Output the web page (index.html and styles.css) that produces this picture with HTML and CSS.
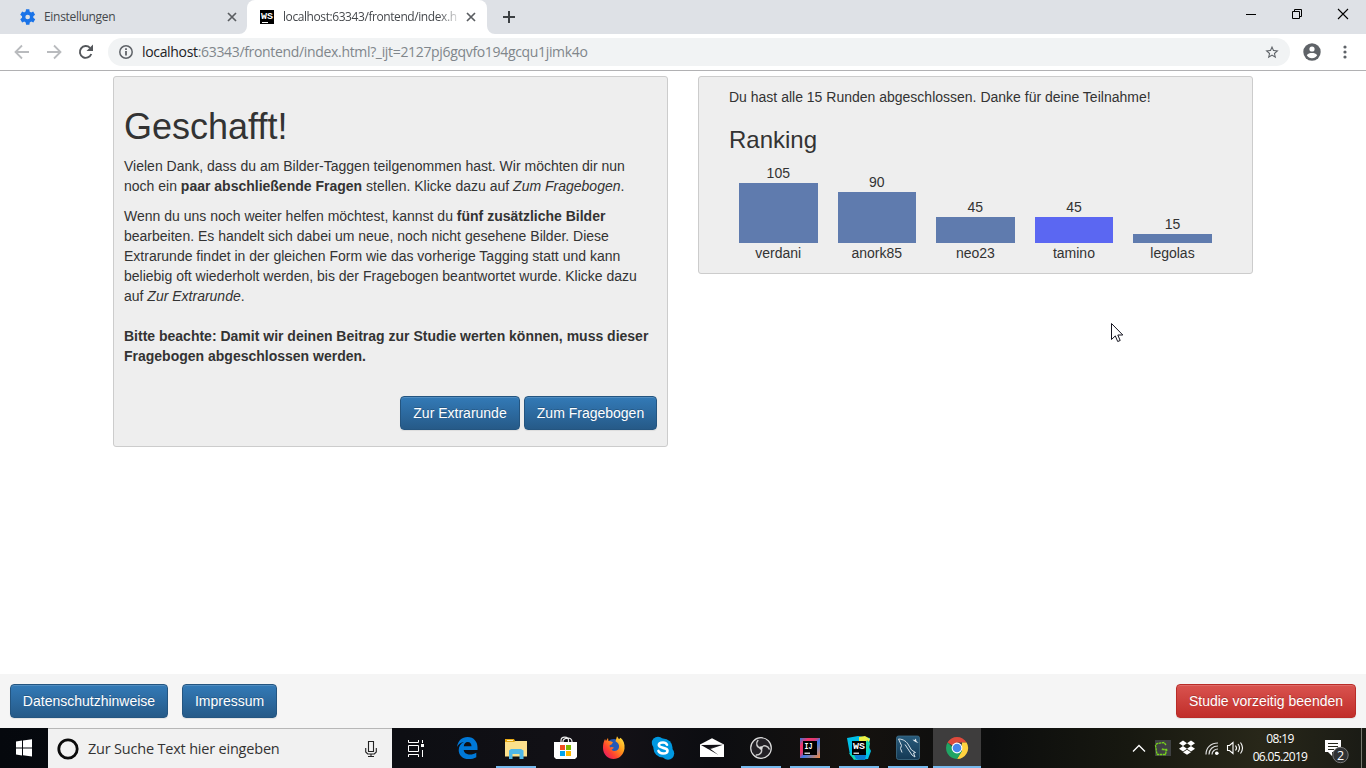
FILE: index.html
```html
<!DOCTYPE html>
<html lang="de">
<head>
<meta charset="utf-8">
<title>Tagging-Studie</title>
<link rel="stylesheet" href="styles.css">
</head>
<body>
<header class="browser">
  <div class="tabs">
    <div class="tab tab-idle">
      <svg class="favicon" width="16" height="16" viewBox="0 0 24 24"><path fill="#1a73e8" d="M19.9 13.3c.1-.4.1-.9.1-1.300s0-.9-.1-1.300l2.700-2.100-2.800-4.800-3.200 1.300c-.7-.5-1.400-.9-2.200-1.300L14 .5H9l-.5 3.300c-.8.3-1.500.7-2.200 1.300L3.200 3.800.4 8.600l2.700 2.100c-.1.400-.1.900-.1 1.300s0 .9.1 1.300L.4 15.400l2.800 4.800 3.200-1.300c.7.500 1.400.9 2.200 1.300l.5 3.300h5l.5-3.300c.8-.3 1.500-.7 2.200-1.300l3.200 1.300 2.800-4.800zM11.500 15.500a3.500 3.500 0 1 1 0-7 3.500 3.500 0 0 1 0 7z"/></svg>
      <span class="tab-title t-settings">Einstellungen</span>
      <svg class="tab-close" width="10" height="10"><path d="M1 1l8 8M9 1l-8 8" stroke="#5a5d61" stroke-width="1.700"/></svg>
    </div>
    <div class="tab tab-active">
      <svg class="curve curve-left" width="8" height="8"><path d="M8 0v8H0a8 8 0 0 0 8-8z" fill="#fff"/></svg>
      <svg class="curve curve-right" width="8" height="8"><path d="M0 0v8h8a8 8 0 0 1-8-8z" fill="#fff"/></svg>
      <svg class="favicon ws-small" width="14" height="14"><rect width="14" height="14"/><text x="1" y="8.800" class="ws-text" textLength="12" lengthAdjust="spacingAndGlyphs">WS</text><path d="M2 12.500h6" stroke="#fff"/></svg>
      <span class="tab-title t-local">localhost:63343/frontend/index.h</span>
      <svg class="tab-close" width="10" height="10"><path d="M1 1l8 8M9 1l-8 8" stroke="#5a5d61" stroke-width="1.700"/></svg>
    </div>
    <svg class="new-tab" width="12" height="12"><path d="M6 0v12M0 6h12" stroke="#3c4043" stroke-width="2"/></svg>
    <div class="window-controls">
      <svg width="46" height="28"><path d="M18 14.500h10" stroke="#000"/></svg>
      <svg width="46" height="28"><path d="M18.500 11.500h7v7h-7zM20.500 11V9.500h7v7H26" fill="none" stroke="#000"/></svg>
      <svg width="46" height="28"><path d="M18 9l10 10M28 9L18 19" stroke="#000" stroke-width="1.100"/></svg>
    </div>
  </div>
  <div class="toolbar">
    <svg class="nav" width="32" height="36"><path d="M29 18H16M22 11.500L15.500 18l6.500 6.500" fill="none" stroke="#b9bbbe" stroke-width="1.800"/></svg>
    <svg class="nav" width="32" height="36"><path d="M15 18h13M22 11.500l6.500 6.500-6.500 6.500" fill="none" stroke="#b9bbbe" stroke-width="1.800"/></svg>
    <svg class="nav" width="32" height="36"><path d="M27.300 20a5.900 5.900 0 1 1-1.300-6.200" fill="none" stroke="#54575b" stroke-width="1.900"/><path d="M29 10.500v6.500h-6.500z" fill="#54575b"/></svg>
    <div class="omnibox">
      <svg class="info" width="14" height="14"><circle cx="7" cy="7" r="6.200" fill="none" stroke="#5f6368" stroke-width="1.500"/><path d="M7 6v4.500M7 3.300v1.700" stroke="#5f6368" stroke-width="1.800"/></svg>
      <span class="url"><span class="host">localhost</span>:63343/frontend/index.html?_ijt=2127pj6gqvfo194gcqu1jimk4o</span>
      <svg class="star" width="14" height="14" viewBox="2 1 20 21"><path fill="#5f6368" d="M22 9.240l-7.190-.62L12 2 9.190 8.630 2 9.240l5.460 4.730L5.820 21 12 17.270 18.180 21l-1.630-7.030L22 9.240zM12 15.400l-3.760 2.270 1-4.280-3.320-2.880 4.380-.38L12 6.100l1.710 4.040 4.380.38-3.320 2.880 1 4.280L12 15.400z"/></svg>
    </div>
    <svg class="avatar" width="18" height="18" viewBox="0 0 18 18"><circle cx="9" cy="9" r="8.700" fill="#5f6368"/><circle cx="9" cy="6" r="2.600" fill="#fff"/><path d="M3.800 12.300C4.600 10.700 7 10.100 9 10.100s4.400.6 5.200 2.200C13 14.200 11.200 15.200 9 15.200s-4-1-5.200-2.900z" fill="#fff"/></svg>
    <svg class="dots" width="4" height="14"><g fill="#5f6368"><circle cx="2" cy="2" r="1.600"/><circle cx="2" cy="7" r="1.600"/><circle cx="2" cy="12" r="1.600"/></g></svg>
  </div>
</header>

<main class="page">
  <section class="card intro">
    <h1>Geschafft!</h1>
    <p>Vielen Dank, dass du am Bilder-Taggen teilgenommen hast. Wir möchten dir nun<br>noch ein <b>paar abschließende Fragen</b> stellen. Klicke dazu auf <i>Zum Fragebogen</i>.</p>
    <p>Wenn du uns noch weiter helfen möchtest, kannst du <b>fünf zusätzliche Bilder</b><br>bearbeiten. Es handelt sich dabei um neue, noch nicht gesehene Bilder. Diese<br>Extrarunde findet in der gleichen Form wie das vorherige Tagging statt und kann<br>beliebig oft wiederholt werden, bis der Fragebogen beantwortet wurde. Klicke dazu<br>auf <i>Zur Extrarunde</i>.</p>
    <p class="notice"><b>Bitte beachte: Damit wir deinen Beitrag zur Studie werten können, muss dieser<br>Fragebogen abgeschlossen werden.</b></p>
    <div class="actions"><button class="btn extra">Zur Extrarunde</button><button class="btn survey">Zum Fragebogen</button></div>
  </section>
  <section class="card ranking">
    <p>Du hast alle 15 Runden abgeschlossen. Danke für deine Teilnahme!</p>
    <h3>Ranking</h3>
    <div class="chart">
      <div class="entry"><span>105</span><div class="bar" style="height:60px"></div><span>verdani</span></div>
      <div class="entry"><span>90</span><div class="bar" style="height:51px"></div><span>anork85</span></div>
      <div class="entry"><span>45</span><div class="bar" style="height:26px"></div><span>neo23</span></div>
      <div class="entry"><span>45</span><div class="bar bar-me" style="height:26px"></div><span>tamino</span></div>
      <div class="entry"><span>15</span><div class="bar" style="height:9px"></div><span>legolas</span></div>
    </div>
  </section>
  <svg class="cursor" width="13" height="20"><path d="M.5.500v16l3.800-3.600 2.400 5.600 2.500-1-2.400-5.500h5z" fill="#fff" stroke="#151520"/></svg>
</main>

<footer class="footer">
  <button class="btn privacy">Datenschutzhinweise</button>
  <button class="btn imprint">Impressum</button>
  <button class="btn btn-danger">Studie vorzeitig beenden</button>
</footer>

<nav class="taskbar">
  <svg class="start" width="48" height="40"><path fill="#fff" d="M16 13.500l6-.9V19.500h-6zM23 12.500l9-1.300v8.300h-9zM16 20.500h6v6.900l-6-.9zM23 20.500h9v8l-9-1.200z"/></svg>
  <div class="search">
    <svg width="22" height="22"><circle cx="11" cy="11" r="9.200" fill="none" stroke="#0a0a0a" stroke-width="2.800"/></svg>
    <span class="placeholder">Zur Suche Text hier eingeben</span>
    <svg class="mic" width="12" height="18"><path d="M3.500 1.500h5v10h-5zM.7 8v4l2 2h6.600l2-2V8M6 14v3M3 16.500h6" fill="none" stroke="#222" stroke-width="1.100"/></svg>
  </div>
  <div class="apps">
    <div class="app app-tasks"><svg width="48" height="40"><g fill="none" stroke="#fff"><path d="M16.500 12v2.500h10V12M16.500 17.500h10v6h-10zM16.500 29v-2.500h10V29M30.500 12v3M30.500 22v7"/></g><path d="M29 16h3v3h-3z" fill="#fff"/></svg></div>
    <div class="app"><svg width="48" height="40"><path fill="#0078d7" d="M14 19C15 12.500 19 9 24.500 9 31 9 34.500 14 34.500 19v3H20.700c.3 3 3.200 4.500 6.300 4.500 2.400 0 4.300-.6 6.300-1.800v4.500c-2.200 1.300-4.700 1.900-7.600 1.900-6 0-10-3.600-10-8.800 0-3.900 2-6.900 5.300-8.300-3 .5-5.500 2-7 5zM20.800 18.200h7.700c0-2.700-1.300-4.300-3.700-4.300-2.300 0-3.800 1.800-4 4.300z"/></svg></div>
    <div class="app running"><svg width="48" height="40"><path fill="#e8a914" d="M13 11h9l1 2h12v3H13z"/><path fill="#fce08c" d="M13 14h9l1.500-1H35v15.500H13z"/><path fill="#fff0b5" d="M15 12h6v1h-6z"/><path fill="#4fb7e8" d="M17 31v-8.500l2-1.500h10l2.500 1.500V31h-4v-5h-7v5z"/></svg></div>
    <div class="app"><svg width="48" height="40"><path d="M20 15v-2.500c0-4.500 7.500-4.500 7.500 0V15M22 15v-1.500c0-3.700 9-5.500 9 0V15" fill="none" stroke="#eee" stroke-width="1.200"/><path fill="#fff" d="M13 14h23v15l-2 2H15l-2-2z"/><path fill="#f25022" d="M19 17h5v5h-5z"/><path fill="#7fba00" d="M25 17h5v5h-5z"/><path fill="#00a4ef" d="M19 23h5v5h-5z"/><path fill="#ffb900" d="M25 23h5v5h-5z"/></svg></div>
    <div class="app"><svg width="48" height="40"><defs><linearGradient id="fox" x1="1" y1="0" x2="0" y2="1"><stop offset="0" stop-color="#fff24a"/><stop offset=".38" stop-color="#ff9a1a"/><stop offset=".67" stop-color="#ff4230"/><stop offset="1" stop-color="#d90a78"/></linearGradient></defs><circle cx="24" cy="19.500" r="8.500" fill="#2459b7"/><path fill="url(#fox)" d="M15 11l1 2c1-2 2-3 2-3l.5 3c1.500 0 3 .4 4.500 1.300l-1.500 2.200-2 1 .5 2c1-.8 2.500-.7 4 .2l-2.500 2c2 2 5.500 1.500 7-1 1.500-3 0-6-3-7.500l1.500-5 2 3 1.500-1.500c3 2.300 4.500 6 4 11-1 6.500-5.500 10.300-11 10.300S13 26.500 13 20c0-3.500.5-6 2-9z"/></svg></div>
    <div class="app"><svg width="48" height="40"><g fill="#0098e0"><circle cx="19" cy="15" r="6.200"/><circle cx="29" cy="25.500" r="6.200"/><circle cx="24" cy="20" r="9.600"/></g><path fill="none" stroke="#fff" stroke-width="2.600" stroke-linecap="round" d="M28 16.700c-.8-1.700-2.200-2.200-4-2.200-2.500 0-4.200 1-4.200 2.600 0 3.800 8.700 1.700 8.700 5.600 0 1.800-1.800 2.800-4.400 2.800-2.300 0-4-.8-4.700-2.600"/></svg></div>
    <div class="app"><svg width="48" height="40"><path fill="#fff" d="M12 16.500l12-6.300 12 6.300V29H12z"/><path fill="#111015" d="M13 17l22-.2-12.500 4.200 8 6z"/><path fill="#fff" d="M20 21.500l9-3.500-8.500 3.500z"/></svg></div>
    <div class="app running"><svg width="48" height="40"><circle cx="24" cy="20" r="10.300" fill="#232126" stroke="#ddd" stroke-width="1.200"/><g fill="none" stroke="#ccc" stroke-width="1.500"><path d="M24 20c-4.500-.5-5.500-5-2.800-8"/><path d="M24 20c2.700-3.600 7-2.300 8.500 1.500M24 20c2 4.200-1.300 7.300-5.200 7"/></g><circle cx="24" cy="20" r="1.700" fill="#ddd"/></svg></div>
    <div class="app running"><svg width="48" height="40"><defs><linearGradient id="ij" x1="0" y1="0" x2="1" y2="1"><stop offset="0" stop-color="#287bde"/><stop offset=".22" stop-color="#f5356b"/><stop offset=".42" stop-color="#d83b74"/><stop offset=".55" stop-color="#397be8"/><stop offset="1" stop-color="#f9863c"/></linearGradient></defs><path fill="url(#ij)" d="M14 10h20v20H14z"/><path d="M17 13h14v14H17z"/><text x="18.500" y="20.500" class="icon-text" textLength="8" lengthAdjust="spacingAndGlyphs">IJ</text><path d="M18.500 25.200h5.500" stroke="#fff" stroke-width="1.200"/></svg></div>
    <div class="app running"><svg width="48" height="40"><path fill="#00bfe7" d="M12 10l11-2 12 2-1 9 2 4-3 8-12 1-6-5z"/><path fill="#edf246" d="M24 9l6-1 5 3-2 5-9-3z"/><path fill="#10d9b2" d="M32 12l3 3-2 12-4-8zM14 25l16 3-11 4z"/><path fill="#087dd2" d="M19 27h12l-1 5-9-1z"/><path d="M17 13h14v14H17z"/><text x="18" y="20.500" class="icon-text" textLength="12" lengthAdjust="spacingAndGlyphs">WS</text><path d="M18.500 25.200h5.500" stroke="#fff" stroke-width="1.200"/></svg></div>
    <div class="app running"><svg width="48" height="40"><defs><linearGradient id="sql" x1="0" y1="0" x2="0" y2="1"><stop stop-color="#285b7b"/><stop offset="1" stop-color="#143955"/></linearGradient></defs><rect x="12.500" y="8" width="23" height="23.500" rx="2" fill="url(#sql)" stroke="#3e6d88" stroke-width=".8"/><path d="M18 24.500l-1.500-4 1-3-3-6.500c5 0 8.500 3 10 6l3 5 4 2.500-2 .5 1.500 4-3-2-7-10.500" fill="none" stroke="#d6e1e9" stroke-width="1"/><path d="M28.500 11.500l2 .5 1.500-1.500.3 2.500 2.200 2-2.500-.8-2-1.300z" fill="#e6edf2"/></svg></div>
    <div class="app running app-current"><svg width="48" height="40"><path fill="#de4a3c" d="M24 20L14.500 14.500A11 11 0 0 1 33.500 14.500H24z"/><path fill="#ffd23f" d="M33.600 14.500A11 11 0 0 1 24 31l5-8.500V14.500z"/><path fill="#20a464" d="M14.500 14.500A11 11 0 0 0 24 31l5-8h-5z"/><circle cx="24" cy="20" r="5.400" fill="#fff"/><circle cx="24" cy="20" r="4.300" fill="#4787ed"/></svg></div>
  </div>
  <div class="tray">
    <svg width="24" height="40"><path d="M6 23.500l6-6 6 6" fill="none" stroke="#fff" stroke-width="1.300"/></svg>
    <svg width="24" height="40"><path d="M4 12h16v16H4z" fill="#3f4142"/><path d="M15 17l-2-2.500L6 15.500l-1.500 2L6 26.500h8.500l1-5h-5M11 21l6 1.500" fill="none" stroke="#77d41c" stroke-width="1.300" stroke-dasharray="2.500 .6"/></svg>
    <svg width="24" height="40"><path fill="#fff" d="M8 12.500l4 2.700-4 2.700-4-2.700zM16 12.500l4 2.700-4 2.700-4-2.700zM8 18l4 2.700-4 2.700-4-2.700zM16 18l4 2.700-4 2.700-4-2.700zM12 21.800l4 2.500-4 2.500-4-2.500z"/></svg>
    <svg width="24" height="40"><g fill="none" stroke="#ddd" stroke-width="1.200"><path d="M7 26.500C7 19.500 12 15 19 15M10 26.500C10 21 14 18 19 18M13 26.500C13 23 16 21 19 21"/></g><circle cx="17.800" cy="25.300" r="1.800" fill="#fff"/></svg>
    <svg width="24" height="40"><path d="M4.500 17.500h2l3.500-3v11l-3.500-3h-2zM12.500 17.500q2 2.500 0 5M15 16q3 4 0 8M17.500 14.500q4 5.500 0 11" fill="none" stroke="#fff" stroke-width="1.100"/></svg>
    <div class="clock"><span class="time">08:19</span><span class="date">06.05.2019</span></div>
    <svg class="messages" width="48" height="40"><path fill="#fff" d="M12 12h16v12h-9v4l-4-4h-3z"/><path d="M15 15.500h10M15 18.500h10M15 21.500h6" stroke="#25271c"/><circle cx="27.500" cy="27" r="7.700" fill="#303234" stroke="#777" stroke-width="1"/><text x="24.100" y="31.500" class="badge-text">2</text></svg>
  </div>
</nav>
</body>
</html>
```
FILE: styles.css
```css
* { box-sizing: border-box; }
body { margin: 0; width: 1366px; height: 768px; overflow: hidden; display: flex; flex-direction: column; background: #fff; color: #333; font: 14px/20px "Liberation Sans", sans-serif; }
svg { display: block; flex: none; }

/* Browser frame */
.browser { height: 71px; flex: none; border-bottom: 1px solid #b1b1b3; font-family: "Open Sans", sans-serif; }
.tabs { height: 34px; display: flex; background: #dee1e6; }
.tab { position: relative; display: flex; align-items: center; height: 34px; }
.tab-idle { width: 247px; padding: 0 10px 0 20px; }
.tab-active { width: 240px; padding: 0 11px 0 13px; background: #fff; border-radius: 8px 8px 0 0; }
.favicon { margin-right: 8px; }
.ws-small { margin-right: 9px; }
.tab-title { font-size: 12px; color: #45484c; white-space: nowrap; }
.t-settings { letter-spacing: -.3px; }
.t-local { width: 177px; letter-spacing: -.42px; -webkit-mask-image: linear-gradient(90deg, #000 155px, transparent 179px); mask-image: linear-gradient(90deg, #000 155px, transparent 179px); }
.tab-close { margin-left: auto; }
.curve { position: absolute; bottom: 0; }
.curve-left { left: -8px; }
.curve-right { right: -8px; }
.new-tab { margin: 11px 0 0 16px; }
.window-controls { display: flex; margin-left: auto; }
.toolbar { display: flex; align-items: center; height: 36px; }
.omnibox { display: flex; align-items: center; width: 1182px; height: 28px; margin-left: 12px; padding: 0 11px; border-radius: 14px; background: #f1f3f4; }
.url { margin-left: 9px; font-size: 14px; color: #80868b; letter-spacing: -.33px; white-space: nowrap; }
.host { color: #202124; }
.star { margin-left: auto; }
.avatar { margin-left: 13px; }
.dots { margin-left: 22px; }

/* Study page */
.page { position: relative; flex: 1; display: flex; align-items: flex-start; gap: 30px; padding: 5px 113px 0; }
.card { width: 555px; padding: 10px; border: 1px solid #ccc; border-radius: 3px; background: #eee; }
.intro { height: 371px; }
h1, h3 { font-weight: 400; line-height: 1.1; }
h1 { margin: 20px 0 9.4px; font-size: 36px; }
h3 { margin: 20px 0 10px; font-size: 24px; }
p { margin: 0 0 10px; white-space: nowrap; }
.notice { margin-top: 20px; }
.actions { display: flex; justify-content: flex-end; gap: 4px; margin-top: 30px; }
.ranking { height: 198px; padding: 10px 30px; }
.chart { display: flex; align-items: flex-end; height: 99.600px; }
.entry { width: 98.550px; padding: 0 10px; text-align: center; }
.entry span { display: block; }
.bar { background: #5f7bae; }
.bar-me { background: #5b67f2; }
.cursor { position: absolute; left: 1111px; top: 252px; }
.btn { height: 34px; padding: 0; color: #fff; font: 14px/20px "Liberation Sans", sans-serif; white-space: nowrap; border: 1px solid #245580; border-radius: 4px; background: linear-gradient(#337ab7, #265a88); box-shadow: inset 0 1px 0 rgba(255,255,255,.15), 0 1px 1px rgba(0,0,0,.075); text-shadow: 0 -1px 0 rgba(0,0,0,.2); }
.extra { width: 120px; }
.survey { width: 133px; }
.privacy { width: 158px; }
.imprint { width: 95px; }
.btn-danger { width: 180px; margin-left: auto; border-color: #b92c28; background: linear-gradient(#d9534f, #c12e2a); }
.footer { display: flex; gap: 14px; height: 54px; flex: none; padding: 10px; background: #f5f5f5; }

/* Windows taskbar */
.taskbar { display: flex; height: 40px; flex: none; font-family: "Open Sans", sans-serif; background: linear-gradient(90deg, #05080d 0, #0d0e13 400px, #131116 620px, #0c0d11 710px, #15120f 850px, #0c0d0d 990px, #171810 1130px, #282719 1260px, #1a1b15 1366px); }
.search { display: flex; align-items: center; width: 344px; padding: 0 15px 0 9px; border-top: 1px solid #b7b7b7; background: #f1f1f1; color: #333; }
.placeholder { margin-left: 9px; font-size: 14.500px; white-space: nowrap; letter-spacing: -.2px; }
.mic { margin-left: auto; }
.apps { display: flex; gap: 1px; }
.app { position: relative; width: 48px; height: 40px; }
.app-tasks { margin-right: 2px; }
.running { background: linear-gradient(#76b9ed, #76b9ed) center bottom / 40px 2px no-repeat; }
.app-current { background-color: #3e3d3d; background-size: 48px 2px; }
.tray { display: flex; width: 235px; margin-left: auto; margin-right: 4px; border-right: 1px solid #77786f; }
.clock { display: flex; flex-direction: column; align-items: center; width: 66px; padding-top: 2px; color: #fff; font-size: 12px; line-height: 18px; white-space: nowrap; }
.time, .date { letter-spacing: -.65px; }
.messages { margin-right: -1px; }
.ws-text { font: bold 9px "Liberation Mono", monospace; fill: #fff; }
.icon-text { font: bold 9.500px "Liberation Mono", monospace; fill: #fff; }
.badge-text { font: 12.500px "Open Sans", sans-serif; fill: #fff; }
```
